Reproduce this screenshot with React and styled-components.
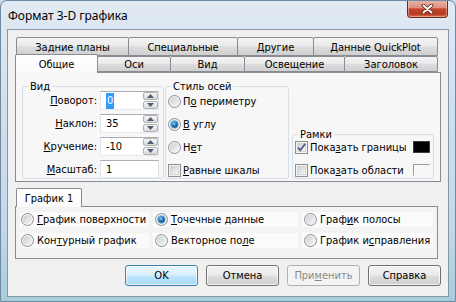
import React from 'react';
import styled, { createGlobalStyle } from 'styled-components';

const UI = '"DejaVu Sans Condensed", "DejaVu Sans", Tahoma, sans-serif';
const TITLE = '"Noto Sans", "Open Sans", sans-serif';

const GlobalStyle = createGlobalStyle`
  html, body { margin: 0; padding: 0; width: 456px; height: 302px; overflow: hidden; background: #c8d9e8; }
  #root { width: 456px; height: 302px; }
  * { box-sizing: border-box; }
`;

const Window = styled.div`
  width: 456px;
  height: 302px;
  border: 1px solid #6f8aa3;
  border-radius: 7px 7px 0 0;
  background: linear-gradient(180deg, #e1eaf3 0%, #d2dfec 35%, #c5d8e8 75%, #a6cdd8 100%);
  display: flex;
  flex-direction: column;
  padding: 0 6px 4px 6px;
  overflow: hidden;
`;

const TitleBar = styled.div`
  height: 28px;
  margin: 0 -6px;
  padding-left: 7px;
  display: flex;
  align-items: flex-start;
`;

const TitleText = styled.div`
  align-self: center;
  font-family: ${TITLE};
  font-size: 12px;
  color: #000;
  line-height: 16px;
  margin-top: 1px;
`;

const CloseButton = styled.div`
  margin-left: auto;
  margin-right: 7px;
  margin-top: -1px;
  width: 41px;
  height: 18px;
  border: 1px solid #6a2a1e;
  border-top: none;
  border-radius: 0 0 4px 4px;
  background: linear-gradient(180deg, #e9b6a8 0%, #dc917d 45%, #c54a31 52%, #b9361f 80%, #d7694d 100%);
  box-shadow: inset 0 0 0 1px rgba(255, 220, 210, 0.45);
  display: flex;
  align-items: center;
  justify-content: center;
`;

const Client = styled.div`
  flex: 1;
  border: 1px solid #8497aa;
  background: #f0f0f0;
  display: flex;
  flex-direction: column;
  padding: 7px 7px 0 7px;
  font-family: ${UI};
  font-size: 11px;
  color: #000;
`;

const TabRow = styled.div`
  display: flex;
  align-items: flex-end;
  height: ${p => p.$h}px;
  padding-left: ${p => p.$indent}px;
  position: relative;
`;

const Tab = styled.div`
  width: ${p => p.$w}px;
  height: ${p => (p.$active ? p.$h + 3 : p.$h)}px;
  margin-left: -1px;
  margin-bottom: ${p => (p.$active ? -1 : 0)}px;
  &:first-child { margin-left: 0; }
  position: relative;
  z-index: ${p => (p.$active ? 2 : 1)};
  border: 1px solid #898c95;
  border-bottom: ${p => (p.$active ? 'none' : '1px solid #898c95')};
  border-radius: 2px 2px 0 0;
  background: ${p =>
    p.$active
      ? 'linear-gradient(180deg, #ffffff 0%, #fbfbfb 100%)'
      : 'linear-gradient(180deg, #f3f3f3 0%, #ebebeb 45%, #dddddd 52%, #d0d0d0 100%)'};
  display: flex;
  align-items: center;
  justify-content: center;
  white-space: nowrap;
  line-height: 13px;
  padding-top: ${p => (p.$active ? 0 : 1)}px;
`;

const Panel = styled.div`
  height: 110px;
  border: 1px solid #898c95;
  background: #f7f7f7;
  display: flex;
  align-items: stretch;
  padding: 7px 0 2px 6px;
`;

const Group = styled.fieldset`
  margin: 0 ${p => p.$gap}px 0 0;
  padding: 0 ${p => p.$pr || 0}px 0 ${p => p.$pl || 0}px;
  width: ${p => p.$w}px;
  border: 1px solid #d5dfe5;
  border-radius: 3px;
  min-width: 0;
  align-self: ${p => p.$align || 'stretch'};
  display: flex;
  flex-direction: column;
`;

const Legend = styled.legend`
  margin-left: 5px;
  padding: 0 2px;
  line-height: 13px;
  height: 13px;
`;

const SpinGrid = styled.div`
  margin-top: -2px;
  display: grid;
  grid-template-columns: 74px 59px;
  column-gap: 3px;
  row-gap: 4px;
  align-items: center;
`;

const FieldLabel = styled.div`
  text-align: right;
  white-space: nowrap;
  line-height: 13px;
`;

const Field = styled.div`
  height: ${p => (p.$short ? 18 : 19)}px;
  width: 59px;
  border: 1px solid;
  border-color: #abadb3 #dbdfe6 #e3e9ef #e2e3ea;
  background: #fff;
  display: flex;
  align-items: center;
  padding-left: 5px;
  line-height: 13px;
`;

const Selected = styled.span`
  background: #3399ff;
  color: #fff;
  padding: 1px 1px;
  line-height: 14px;
`;

const Spinner = styled.div`
  margin-left: auto;
  width: 16px;
  height: 100%;
  display: flex;
  flex-direction: column;
  gap: 1px;
  padding: 0 0 0 1px;
`;

const SpinButton = styled.div`
  flex: 1;
  border: 1px solid #b1b1b1;
  border-radius: 2px;
  background: linear-gradient(180deg, #f6f6f6 0%, #e8e8e8 50%, #d9d9d9 100%);
  display: flex;
  align-items: center;
  justify-content: center;
`;

const OptionList = styled.div`
  display: flex;
  flex-direction: column;
  gap: 7px;
  margin-top: ${p => p.$mt || 0}px;
  padding-right: ${p => p.$pr || 0}px;
`;

const Option = styled.div`
  height: 16px;
  display: flex;
  align-items: center;
  gap: 2px;
  padding-left: 2px;
  white-space: nowrap;
  line-height: 13px;
`;

const Swatch = styled.div`
  margin-left: auto;
  width: 17px;
  height: 12px;
  background: ${p => (p.$filled ? '#000' : 'transparent')};
  border: 1px solid;
  border-color: ${p => (p.$filled ? '#3a3a3a' : '#9a9a9a #f6f6f6 #f6f6f6 #9a9a9a')};
`;

const SubTabs = styled.div`
  margin-top: 6px;
  display: flex;
  flex-direction: column;
`;

const SubPanel = styled.div`
  width: 423px;
  height: 53px;
  border: 1px solid #898c95;
  background: #f3f3f3;
  padding: 5px 0 0 4px;
  display: grid;
  grid-template-columns: 129px 145px 131px;
  grid-auto-rows: 15px;
  column-gap: 4px;
  row-gap: 6px;
`;

const ChartOption = styled.div`
  background: #fbfbfb;
  display: flex;
  align-items: center;
  gap: 3px;
  padding-left: ${p => p.$pl}px;
  white-space: nowrap;
  line-height: 13px;
`;

const ButtonRow = styled.div`
  margin-top: 6px;
  display: flex;
  justify-content: flex-end;
  gap: 8px;
`;

const Button = styled.div`
  width: 73px;
  height: 21px;
  border: 1px solid ${p => (p.$default ? '#3c7fb1' : p.$disabled ? '#adb2b5' : '#707070')};
  border-radius: 3px;
  background: ${p =>
    p.$default
      ? 'linear-gradient(180deg, #eaf6fd 0%, #d9f0fc 48%, #bee6fd 52%, #a7d9f5 100%)'
      : p.$disabled
      ? '#f4f4f4'
      : 'linear-gradient(180deg, #f2f2f2 0%, #ebebeb 48%, #dddddd 52%, #cfcfcf 100%)'};
  box-shadow: inset 0 0 0 1px ${p => (p.$disabled ? '#f4f4f4' : 'rgba(255,255,255,0.75)')};
  color: ${p => (p.$disabled ? '#8a8a8a' : '#000')};
  display: flex;
  align-items: center;
  justify-content: center;
  line-height: 13px;
`;

const RadioIcon = ({ checked }) => (
  <svg width="13" height="13" viewBox="0 0 13 13" style={{ flex: 'none' }}>
    <defs>
      <linearGradient id="radioIn" x1="0" y1="0" x2="1" y2="1">
        <stop offset="0" stopColor="#c9ccd1" />
        <stop offset="1" stopColor="#f8f8f8" />
      </linearGradient>
      <radialGradient id="radioDot" cx="0.4" cy="0.35" r="0.7">
        <stop offset="0" stopColor="#9fd3f5" />
        <stop offset="0.45" stopColor="#2c82c4" />
        <stop offset="1" stopColor="#143f70" />
      </radialGradient>
    </defs>
    <circle cx="6.5" cy="6.5" r="6" fill="#f4f4f4" stroke="#8b8f95" />
    <circle cx="6.5" cy="6.5" r="4.6" fill="url(#radioIn)" />
    {checked && (
      <>
        <circle cx="6.5" cy="6.5" r="4.3" fill="#7fbde8" />
        <circle cx="6.5" cy="6.5" r="3.2" fill="url(#radioDot)" />
      </>
    )}
  </svg>
);

const CheckIcon = ({ checked }) => (
  <svg width="13" height="13" viewBox="0 0 13 13" style={{ flex: 'none' }}>
    <defs>
      <linearGradient id="checkIn" x1="0" y1="0" x2="1" y2="1">
        <stop offset="0" stopColor="#cbcdd2" />
        <stop offset="1" stopColor="#f8f8f8" />
      </linearGradient>
    </defs>
    <rect x="0.5" y="0.5" width="12" height="12" fill="#f4f4f4" stroke="#8e8f8f" />
    <rect x="2.5" y="2.5" width="8" height="8" fill="url(#checkIn)" stroke="#d4d4d4" />
    {checked && (
      <path d="M3 6.6 L5.4 9.2 L10.2 2.8" fill="none" stroke="#42588f" strokeWidth="1.7" />
    )}
  </svg>
);

const Arrow = ({ up }) => (
  <svg width="7" height="4" viewBox="0 0 7 4">
    <path d={up ? 'M0 4 L3.5 0 L7 4 Z' : 'M0 0 L3.5 4 L7 0 Z'} fill="#4d5d76" />
  </svg>
);

const CloseGlyph = () => (
  <svg width="13" height="10" viewBox="0 0 13 10">
    <path d="M2.5 1.5 L10.5 8.5 M10.5 1.5 L2.5 8.5" stroke="#5a1d12" strokeWidth="3.6" strokeLinecap="round" />
    <path d="M2.5 1.5 L10.5 8.5 M10.5 1.5 L2.5 8.5" stroke="#ffffff" strokeWidth="2" strokeLinecap="round" />
  </svg>
);

const SpinField = ({ children }) => (
  <Field>
    {children}
    <Spinner>
      <SpinButton><Arrow up /></SpinButton>
      <SpinButton><Arrow /></SpinButton>
    </Spinner>
  </Field>
);

const row1 = [
  { t: 'Задние планы', w: 113 },
  { t: 'Специальные', w: 110 },
  { t: 'Другие', w: 77 },
  { t: 'Данные QuickPlot', w: 125 },
];
const row2 = [
  { t: 'Общие', w: 83, active: true },
  { t: 'Оси', w: 74 },
  { t: 'Вид', w: 75 },
  { t: 'Освещение', w: 101 },
  { t: 'Заголовок', w: 94 },
];

export default function App() {
  return (
    <>
      <GlobalStyle />
      <Window>
        <TitleBar>
          <TitleText>Формат 3-D графика</TitleText>
          <CloseButton><CloseGlyph /></CloseButton>
        </TitleBar>
        <Client>
          <TabRow $h={19} $indent={1}>
            {row1.map(r => (
              <Tab key={r.t} $w={r.w} $h={19}>{r.t}</Tab>
            ))}
          </TabRow>
          <TabRow $h={16} $indent={0}>
            {row2.map(r => (
              <Tab key={r.t} $w={r.w} $h={16} $active={r.active}>{r.t}</Tab>
            ))}
          </TabRow>
          <Panel>
            <Group $w={142} $gap={1}>
              <Legend>Вид</Legend>
              <SpinGrid>
                <FieldLabel><u>П</u>оворот:</FieldLabel>
                <SpinField><Selected>0</Selected></SpinField>
                <FieldLabel><u>Н</u>аклон:</FieldLabel>
                <SpinField>35</SpinField>
                <FieldLabel><u>К</u>ручение:</FieldLabel>
                <SpinField>-10</SpinField>
                <FieldLabel><u>М</u>асштаб:</FieldLabel>
                <Field $short>1</Field>
              </SpinGrid>
            </Group>
            <Group $w={124} $gap={3}>
              <Legend>Стиль осей</Legend>
              <OptionList>
                <Option><RadioIcon /><span>П<u>о</u> периметру</span></Option>
                <Option><RadioIcon checked /><span><u>В</u> углу</span></Option>
                <Option><RadioIcon /><span>Н<u>е</u>т</span></Option>
                <Option><CheckIcon /><span><u>Р</u>авные шкалы</span></Option>
              </OptionList>
            </Group>
            <Group $w={142} $gap={0} $align="flex-end">
              <Legend>Рамки</Legend>
              <OptionList $mt={-2} $pr={3}>
                <Option><CheckIcon checked /><span>Пока<u>з</u>ать границы</span><Swatch $filled /></Option>
                <Option><CheckIcon /><span>Пока<u>з</u>ать области</span><Swatch /></Option>
              </OptionList>
            </Group>
          </Panel>
          <SubTabs>
            <TabRow $h={18} $indent={1}>
              <Tab $w={66} $h={16} $active>График 1</Tab>
            </TabRow>
            <SubPanel>
              <ChartOption $pl={1}><RadioIcon /><span><u>Г</u>рафик поверхности</span></ChartOption>
              <ChartOption $pl={2}><RadioIcon checked /><span><u>Т</u>очечные данные</span></ChartOption>
              <ChartOption $pl={2}><RadioIcon /><span>Граф<u>и</u>к полосы</span></ChartOption>
              <ChartOption $pl={1}><RadioIcon /><span>Кон<u>т</u>урный график</span></ChartOption>
              <ChartOption $pl={2}><RadioIcon /><span>Векторное по<u>л</u>е</span></ChartOption>
              <ChartOption $pl={2}><RadioIcon /><span>График и<u>с</u>правления</span></ChartOption>
            </SubPanel>
          </SubTabs>
          <ButtonRow>
            <Button $default>OK</Button>
            <Button>Отмена</Button>
            <Button $disabled>При<u>м</u>енить</Button>
            <Button>Справка</Button>
          </ButtonRow>
        </Client>
      </Window>
    </>
  );
}
